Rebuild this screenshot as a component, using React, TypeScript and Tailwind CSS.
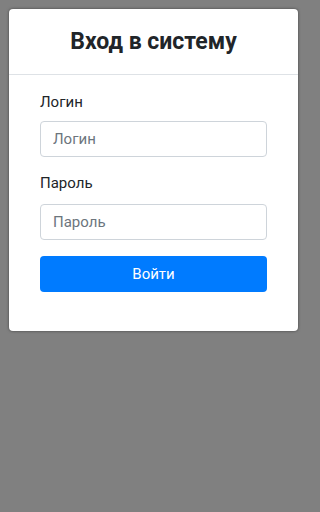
export default function App() {
  return (
    <div className="w-full min-h-[512px] bg-[#808080] font-['Roboto',sans-serif]">
      <div className="w-[307px] p-[9px]">
        <div className="rounded-[4px] bg-white shadow-[0_0_3px_rgba(0,0,0,0.5)]">
          <div className="border-b border-[#dee2e6] pt-[19px] pb-[19px] text-center">
            <h1 className="text-[23px] leading-[27px] font-bold text-[#212529]">Вход в систему</h1>
          </div>
          <form className="px-[31px] pt-[15px] pb-[39px]" onSubmit={(e) => e.preventDefault()}>
            <div className="mb-[14px]">
              <label className="block mb-[7px] text-[15px] leading-[24px] text-[#212529]">Логин</label>
              <input
                type="text"
                placeholder="Логин"
                className="block w-full h-[36px] px-[12px] rounded-[4px] border border-[#ced4da] text-[15px] text-[#495057] placeholder:text-[#6c757d] outline-none"
              />
            </div>
            <div className="mb-[16px]">
              <label className="block mb-[9px] text-[15px] leading-[24px] text-[#212529]">Пароль</label>
              <input
                type="password"
                placeholder="Пароль"
                className="block w-full h-[36px] px-[12px] rounded-[4px] border border-[#ced4da] text-[15px] text-[#495057] placeholder:text-[#6c757d] outline-none"
              />
            </div>
            <button
              type="submit"
              className="block w-full h-[36px] rounded-[4px] bg-[#007bff] text-white text-[15px]"
            >
              Войти
            </button>
          </form>
        </div>
      </div>
    </div>
  );
}
